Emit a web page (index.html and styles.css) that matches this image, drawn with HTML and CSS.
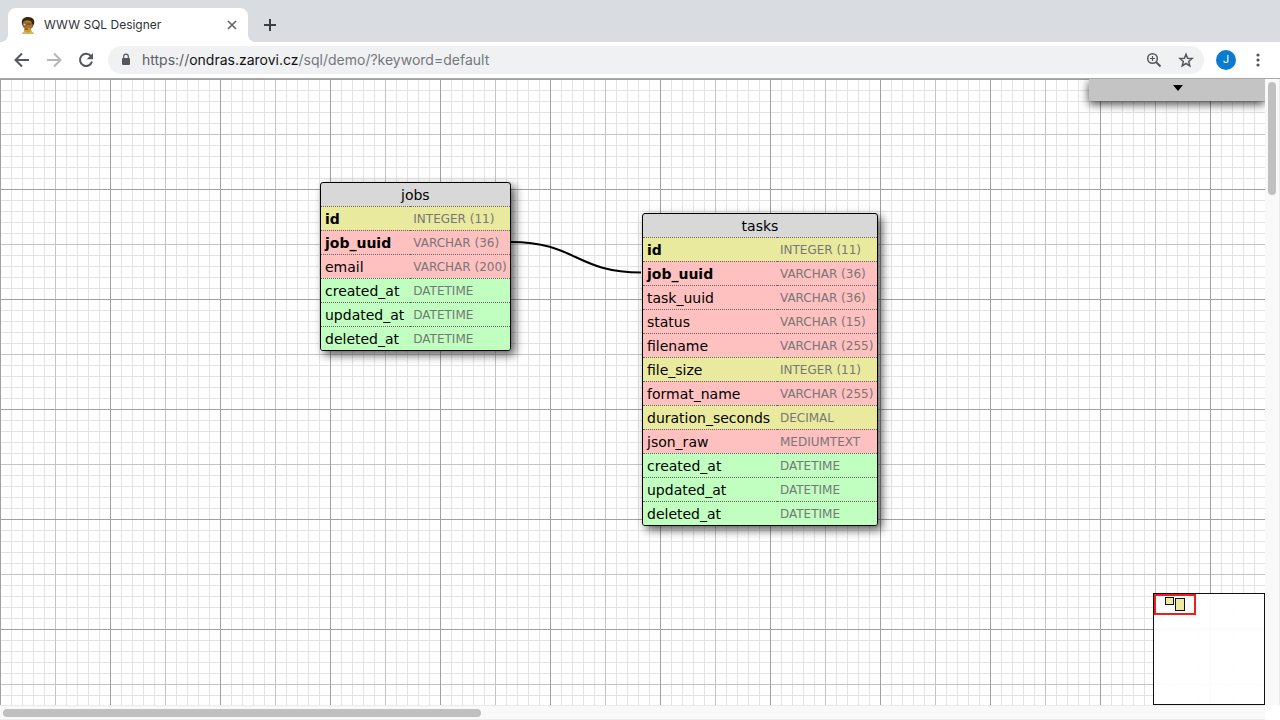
FILE: index.html
```html
<!DOCTYPE html>
<html lang="en">
<head>
<meta charset="utf-8">
<title>WWW SQL Designer</title>
<link rel="stylesheet" href="styles.css">
</head>
<body>
<header class="tabs">
  <div class="tab">
    <svg class="favicon" viewBox="0 0 16 18" aria-hidden="true">
      <path d="M2 8C1 3 4 1 8 1c5 0 7 3 6 7l-2 4H4z" fill="#3a2410"/>
      <path d="M3 6c2-2 5-2 8-1l1 3 1 1-2 4-1 3H5l-1-4z" fill="#a8742e"/>
      <path d="M4 12l6 0 2 4-2 1H4z" fill="#c79a2c"/>
      <path d="M2 17l3-2 3 2 3-2 3 2v1H2z" fill="#d8b469"/>
      <path d="M3 7h3v3H3z" fill="#d9c3b2" stroke="#7a4a34"/>
      <path d="M7 8h4M5 13h3" stroke="#5f3a1c"/>
    </svg>
    <span class="tab-title">WWW SQL Designer</span>
    <button class="icon-button tab-close" aria-label="Close tab"><svg width="16" height="16" viewBox="0 0 16 16"><path d="M4 4l8 8M12 4l-8 8" stroke="#5f6368" stroke-width="1.6"/></svg></button>
  </div>
  <button class="icon-button" aria-label="New tab"><svg width="20" height="20" viewBox="0 0 20 20"><path d="M10 4v12M4 10h12" stroke="#3c4043" stroke-width="2"/></svg></button>
</header>
<nav class="toolbar">
  <button class="icon-button" aria-label="Back"><svg width="20" height="20" viewBox="0 0 20 20"><path d="M17 10H4M10 3.500l-6.500 6.500 6.500 6.500" fill="none" stroke="#54575c" stroke-width="2"/></svg></button>
  <button class="icon-button" aria-label="Forward"><svg width="20" height="20" viewBox="0 0 20 20"><path d="M3 10h13M10 3.500l6.500 6.500-6.500 6.500" fill="none" stroke="#b4b6b9" stroke-width="2"/></svg></button>
  <button class="icon-button" aria-label="Reload"><svg width="20" height="20" viewBox="0 0 20 20"><path d="M15 6.200A6.100 6.100 0 1 0 16 11.500" fill="none" stroke="#54575c" stroke-width="2"/><path d="M17 3v6.300h-6.300z" fill="#54575c"/></svg></button>
  <div class="address">
    <svg class="lock" width="12" height="14" viewBox="0 0 12 14" aria-hidden="true"><rect x="2" y="5" width="8" height="7" rx="1" fill="#54575c"/><path d="M3.700 5.500V3.400a2.300 2.300 0 0 1 4.600 0v2.100" fill="none" stroke="#54575c" stroke-width="1.200"/></svg>
    <a class="url" href="#"><span class="scheme">https://</span><span class="host">ondras.zarovi.cz</span>/sql/demo/?keyword=default</a>
    <button class="icon-button" aria-label="Zoom"><svg width="18" height="18" viewBox="0 0 18 18"><g fill="none" stroke="#54575c"><circle cx="7.500" cy="7.500" r="4.800" stroke-width="1.500"/><path d="M11 11l4.500 4.500" stroke-width="2"/><path d="M7.500 5v5M5 7.500h5" stroke-width="1.200"/></g></svg></button>
    <button class="icon-button" aria-label="Bookmark"><svg width="18" height="18" viewBox="0 0 18 18"><path d="M9 3.200l1.600 4 4.500.3-3.400 2.900 1.100 4.400L9 12.500l-3.800 2.300 1.100-4.400-3.400-2.900 4.500-.3z" fill="none" stroke="#54575c" stroke-width="1.500"/></svg></button>
  </div>
  <button class="avatar" aria-label="Profile">J</button>
  <button class="icon-button menu-button" aria-label="Menu"><svg width="8" height="16" viewBox="0 0 8 16"><g fill="#54575c"><circle cx="4" cy="3" r="1.600"/><circle cx="4" cy="8" r="1.600"/><circle cx="4" cy="13" r="1.600"/></g></svg></button>
</nav>
<main class="workspace">
  <div class="canvas">
    <table class="entity jobs">
      <thead><tr><th colspan="2">jobs</th></tr></thead>
      <tbody>
        <tr class="number key"><td>id</td><td class="type">INTEGER (11)</td></tr>
        <tr class="text key"><td>job_uuid</td><td class="type">VARCHAR (36)</td></tr>
        <tr class="text"><td>email</td><td class="type">VARCHAR (200)</td></tr>
        <tr class="date"><td>created_at</td><td class="type">DATETIME</td></tr>
        <tr class="date"><td>updated_at</td><td class="type">DATETIME</td></tr>
        <tr class="date"><td>deleted_at</td><td class="type">DATETIME</td></tr>
      </tbody>
    </table>
    <table class="entity tasks">
      <thead><tr><th colspan="2">tasks</th></tr></thead>
      <tbody>
        <tr class="number key"><td>id</td><td class="type">INTEGER (11)</td></tr>
        <tr class="text key"><td>job_uuid</td><td class="type">VARCHAR (36)</td></tr>
        <tr class="text"><td>task_uuid</td><td class="type">VARCHAR (36)</td></tr>
        <tr class="text"><td>status</td><td class="type">VARCHAR (15)</td></tr>
        <tr class="text"><td>filename</td><td class="type">VARCHAR (255)</td></tr>
        <tr class="number"><td>file_size</td><td class="type">INTEGER (11)</td></tr>
        <tr class="text"><td>format_name</td><td class="type">VARCHAR (255)</td></tr>
        <tr class="number"><td>duration_seconds</td><td class="type">DECIMAL</td></tr>
        <tr class="text"><td>json_raw</td><td class="type">MEDIUMTEXT</td></tr>
        <tr class="date"><td>created_at</td><td class="type">DATETIME</td></tr>
        <tr class="date"><td>updated_at</td><td class="type">DATETIME</td></tr>
        <tr class="date"><td>deleted_at</td><td class="type">DATETIME</td></tr>
      </tbody>
    </table>
    <svg class="relation" width="132" height="34" viewBox="0 0 132 34" aria-hidden="true"><path d="M1 2C66 2 66 32.500 131 32.500" fill="none" stroke="#000" stroke-width="2"/></svg>
    <button class="panel" aria-label="Toggle panel"><svg width="10" height="6" viewBox="0 0 10 6"><path d="M0 0h10L5 6z"/></svg></button>
    <div class="minimap"><div class="view"></div><div class="mini mini-jobs"></div><div class="mini mini-tasks"></div></div>
  </div>
  <div class="scroll-y"><div class="thumb-y"></div></div>
  <div class="scroll-x"><div class="thumb-x"></div></div>
</main>
</body>
</html>
```
FILE: styles.css
```css
* { box-sizing: border-box; }
body {
  margin: 0;
  height: 100vh;
  display: flex;
  flex-direction: column;
  overflow: hidden;
  background: #fff;
  font-family: "DejaVu Sans", sans-serif;
}
button { border: 0; padding: 0; background: none; font: inherit; }
svg { display: block; }
.icon-button { display: flex; align-items: center; justify-content: center; }

.tabs {
  display: flex;
  align-items: center;
  gap: 12px;
  padding: 8px 8px 0;
  background: #d9dce1;
}
.tab {
  position: relative;
  display: flex;
  align-items: center;
  width: 240px;
  height: 34px;
  padding: 0 8px 0 12px;
  border-radius: 8px 8px 0 0;
  background: #fff;
}
.tab::before, .tab::after {
  content: "";
  position: absolute;
  bottom: 0;
  width: 8px;
  height: 8px;
}
.tab::before { left: -8px; background: radial-gradient(circle at 0 0, transparent 8px, #fff 8px); }
.tab::after { right: -8px; background: radial-gradient(circle at 100% 0, transparent 8px, #fff 8px); }
.favicon { width: 16px; height: 18px; }
.tab-title { flex: 1; margin-left: 8px; font: 12px/16px Inter, sans-serif; color: #303236; }

.toolbar {
  display: flex;
  align-items: center;
  gap: 12px;
  height: 37px;
  padding: 0 18px 0 12px;
  border-bottom: 1px solid #a8a8a8;
}
.address {
  flex: 1;
  display: flex;
  align-items: center;
  gap: 14px;
  height: 28px;
  padding: 0 9px 0 12px;
  border-radius: 14px;
  background: #eff1f3;
}
.url { flex: 1; margin-left: -4px; font: 14px/20px Inter, sans-serif; color: #75787c; text-decoration: none; }
.scheme { color: #5c5f63; }
.host { color: #111; }
.avatar {
  width: 20px;
  height: 20px;
  border-radius: 50%;
  background: #0a7cd0;
  color: #fff;
  font: 11px/20px Roboto, sans-serif;
}
.menu-button { margin-left: 6px; }

.workspace {
  flex: 1;
  min-height: 0;
  display: grid;
  grid-template: 1fr 15px / 1fr 15px;
}
.canvas {
  position: relative;
  overflow: hidden;
  background-image:
    linear-gradient(to right, #a0a0a0 1px, transparent 1px),
    linear-gradient(#a0a0a0 1px, transparent 1px),
    linear-gradient(to right, #c4c4c4 1px, transparent 1px),
    linear-gradient(#c4c4c4 1px, transparent 1px),
    linear-gradient(to right, #e3e3e3 1px, transparent 1px),
    linear-gradient(#e3e3e3 1px, transparent 1px);
  background-size: 110px 110px, 110px 110px, 55px 55px, 55px 55px, 11px 11px, 11px 11px;
}
.entity {
  position: absolute;
  border: 1px solid #000;
  border-radius: 3px;
  border-spacing: 0;
  overflow: hidden;
  background: #d8d8d8;
  box-shadow: 4px 4px 10px rgba(0, 0, 0, .65);
  font-size: 14px;
  line-height: 21px;
  white-space: nowrap;
}
.jobs { left: 320px; top: 103px; width: 190px; }
.tasks { left: 642px; top: 134px; width: 236px; }
.entity th { padding: 2px 0 0; font-weight: 400; }
.entity td { padding: 2px 6px 0 4px; border-top: 1px dotted #666; }
.entity .type { padding: 2px 3px 0; font-size: 12px; font-weight: 400; color: #777; }
.number { background: #eaea9e; }
.text { background: #ffc0c0; }
.date { background: #c0ffc0; }
.key { font-weight: 700; }
.relation { position: absolute; left: 510px; top: 161px; }
.panel {
  position: absolute;
  top: 0;
  right: 0;
  display: flex;
  justify-content: center;
  width: 176px;
  height: 22px;
  padding: 6px 0 0 2px;
  background: #c4c4c4;
  box-shadow: 0 3px 10px rgba(0, 0, 0, .75);
}
.minimap {
  position: absolute;
  right: 0;
  bottom: 0;
  width: 112px;
  height: 112px;
  border: 1px solid #111;
  background: rgba(255, 255, 255, .95);
}
.view { position: absolute; left: 0; top: 0; width: 42px; height: 21px; border: 2px solid #f11c1c; }
.mini { position: absolute; border: 1px solid #111; background: #eeeaa4; }
.mini-jobs { left: 11px; top: 3px; width: 9px; height: 8px; }
.mini-tasks { left: 21px; top: 4px; width: 10px; height: 13px; }
.scroll-y { padding: 3px; background: #f9f9f9; border-right: 1px solid #ebebeb; }
.thumb-y { width: 8px; height: 113px; border-radius: 4px; background: #c0c0c0; }
.scroll-x { padding: 3px; background: #f9f9f9; border-top: 1px solid #ebebeb; border-bottom: 1px solid #ebebeb; }
.thumb-x { width: 38%; height: 8px; border-radius: 4px; background: #c0c0c0; }
```
